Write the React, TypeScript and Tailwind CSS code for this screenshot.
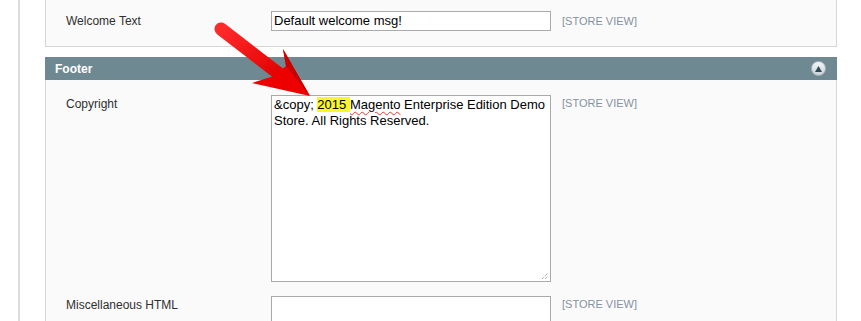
import React from 'react';

const StoreView = () => (
  <span className="ml-[11px] text-[11px] leading-[20px] text-[#8592a0]">[STORE VIEW]</span>
);

const Arrow = () => (
  <svg className="absolute left-0 top-0 pointer-events-none" width="861" height="321" viewBox="0 0 861 321">
    <defs>
      <linearGradient id="shaft" x1="0" y1="0" x2="1" y2="1">
        <stop offset="0" stopColor="#ff2a2a" />
        <stop offset="1" stopColor="#e00000" />
      </linearGradient>
    </defs>
    {/* shaft */}
    <line x1="221" y1="29" x2="282" y2="76" stroke="url(#shaft)" strokeWidth="13" strokeLinecap="round" />
    {/* head */}
    <polygon points="283,49 310,96 252,83 274,76 286,66" fill="#ee0000" />
    <polygon points="283,49 310,96 286,66" fill="#c80000" />
  </svg>
);

export default function App() {
  return (
    <div className="relative w-[861px] h-[321px] overflow-hidden bg-white flex font-['Liberation_Sans',Arial,sans-serif] text-[12px] text-[#2f2f2f]">
      <div className="w-[18px] shrink-0" />
      <div className="w-[2px] shrink-0 bg-[#dcdcdc]" />
      <div className="ml-[25px] w-[792px] flex flex-col">
        {/* previous fieldset */}
        <div className="shrink-0 -mt-[30px] border-x border-b border-[#d6d6d6] bg-[#fafafa] pl-[20px] pt-[10px] pb-[15px]">
          <div className="flex items-center">
            <div className="w-[205px]" />
            <div className="w-[280px] h-[20px] border border-[#aaa] bg-white" />
          </div>
          <div className="flex items-center mt-[11px]">
            <div className="w-[205px] leading-[20px]">Welcome Text</div>
            <div className="w-[280px] h-[20px] border border-[#aaa] bg-white px-[2px] text-[13px] leading-[18px] text-black">
              Default welcome msg!
            </div>
            <StoreView />
          </div>
        </div>

        {/* footer fieldset */}
        <div className="shrink-0 mt-[10px] h-[23px] bg-[#6f8992] flex items-center justify-between pl-[10px] pr-[11px]">
          <span className="text-white font-bold text-[12px]">Footer</span>
          <span className="w-[15px] h-[15px] rounded-full bg-gradient-to-b from-[#f4f6f7] to-[#c9d3d7] border border-[#a8b6bb] flex items-center justify-center">
            <svg width="7" height="6" viewBox="0 0 7 6">
              <polygon points="3.5,0 7,6 0,6" fill="#2d4a56" />
            </svg>
          </span>
        </div>
        <div className="shrink-0 border-x border-[#d6d6d6] bg-[#fafafa] pl-[20px] pt-[15px]">
          <div className="flex items-start">
            <div className="w-[205px] leading-[16px] pt-[1px]">Copyright</div>
            <div className="relative w-[280px] h-[187px] border border-[#aaa] bg-white px-[2px] pt-[1px] text-[13px] leading-[16px] text-black">
              &amp;copy; <span className="bg-[#f7f72a]">2015&nbsp;</span>
              <span className="underline decoration-wavy decoration-[#e33] decoration-1 underline-offset-2">Magento</span> Enterprise Edition Demo Store. All Rights Reserved.
              <svg className="absolute right-[1px] bottom-[1px]" width="8" height="8" viewBox="0 0 8 8">
                <line x1="1" y1="7" x2="7" y2="1" stroke="#888" strokeWidth="1" strokeDasharray="1 1" />
                <line x1="4" y1="7" x2="7" y2="4" stroke="#888" strokeWidth="1" strokeDasharray="1 1" />
              </svg>
            </div>
            <div className="-mt-[2px]">
              <StoreView />
            </div>
          </div>
          <div className="flex items-start mt-[14px]">
            <div className="w-[205px] leading-[16px] pt-[1px]">Miscellaneous HTML</div>
            <div className="w-[280px] h-[60px] border border-[#aaa] bg-white" />
            <div className="-mt-[2px]">
              <StoreView />
            </div>
          </div>
        </div>
      </div>
      <Arrow />
    </div>
  );
}
